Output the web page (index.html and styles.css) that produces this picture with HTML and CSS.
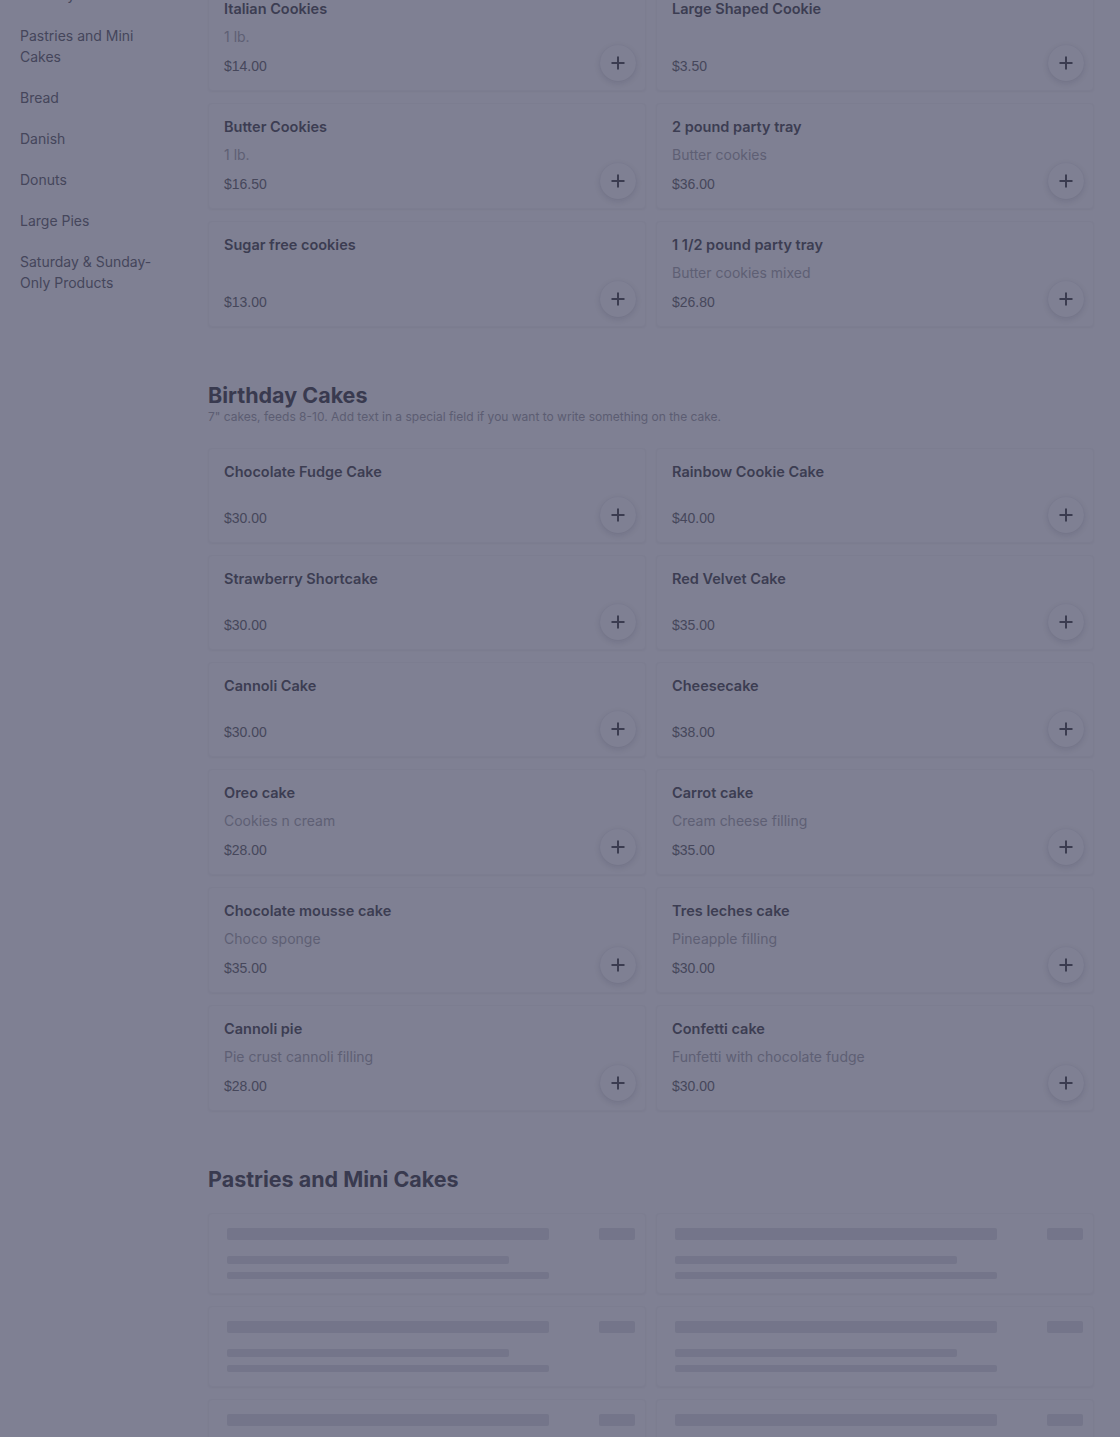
FILE: index.html
```html
<!DOCTYPE html>
<html lang="en">
<head>
<meta charset="utf-8">
<title>Menu</title>
<link rel="stylesheet" href="styles.css">
</head>
<body>
<div class="page">
  <nav class="sidebar">
    <a class="nav-item">Birthday Cakes</a>
    <a class="nav-item">Pastries and Mini Cakes</a>
    <a class="nav-item">Bread</a>
    <a class="nav-item">Danish</a>
    <a class="nav-item">Donuts</a>
    <a class="nav-item">Large Pies</a>
    <a class="nav-item">Saturday &amp; Sunday-Only Products</a>
  </nav>

  <main class="main">
    <section class="section section-first">
      <div class="grid">
        <div class="card"><div class="card-title">Italian Cookies</div><div class="card-desc">1 lb.</div><div class="card-price">$14.00</div><button class="add" aria-label="Add"><svg viewBox="0 0 16 16" width="16" height="16"><path d="M8 1.5v13M1.5 8h13" stroke="currentColor" stroke-width="2" fill="none"/></svg></button></div>
        <div class="card"><div class="card-title">Large Shaped Cookie</div><div class="card-price">$3.50</div><button class="add" aria-label="Add"><svg viewBox="0 0 16 16" width="16" height="16"><path d="M8 1.5v13M1.5 8h13" stroke="currentColor" stroke-width="2" fill="none"/></svg></button></div>
        <div class="card"><div class="card-title">Butter Cookies</div><div class="card-desc">1 lb.</div><div class="card-price">$16.50</div><button class="add" aria-label="Add"><svg viewBox="0 0 16 16" width="16" height="16"><path d="M8 1.5v13M1.5 8h13" stroke="currentColor" stroke-width="2" fill="none"/></svg></button></div>
        <div class="card"><div class="card-title">2 pound party tray</div><div class="card-desc">Butter cookies</div><div class="card-price">$36.00</div><button class="add" aria-label="Add"><svg viewBox="0 0 16 16" width="16" height="16"><path d="M8 1.5v13M1.5 8h13" stroke="currentColor" stroke-width="2" fill="none"/></svg></button></div>
        <div class="card"><div class="card-title">Sugar free cookies</div><div class="card-price">$13.00</div><button class="add" aria-label="Add"><svg viewBox="0 0 16 16" width="16" height="16"><path d="M8 1.5v13M1.5 8h13" stroke="currentColor" stroke-width="2" fill="none"/></svg></button></div>
        <div class="card"><div class="card-title">1 1/2 pound party tray</div><div class="card-desc">Butter cookies mixed</div><div class="card-price">$26.80</div><button class="add" aria-label="Add"><svg viewBox="0 0 16 16" width="16" height="16"><path d="M8 1.5v13M1.5 8h13" stroke="currentColor" stroke-width="2" fill="none"/></svg></button></div>
      </div>
    </section>

    <section class="section">
      <header class="section-head">
        <h2 class="section-title">Birthday Cakes</h2>
        <p class="section-desc">7" cakes, feeds 8-10. Add text in a special field if you want to write something on the cake.</p>
      </header>
      <div class="grid">
        <div class="card"><div class="card-title">Chocolate Fudge Cake</div><div class="card-price">$30.00</div><button class="add" aria-label="Add"><svg viewBox="0 0 16 16" width="16" height="16"><path d="M8 1.5v13M1.5 8h13" stroke="currentColor" stroke-width="2" fill="none"/></svg></button></div>
        <div class="card"><div class="card-title">Rainbow Cookie Cake</div><div class="card-price">$40.00</div><button class="add" aria-label="Add"><svg viewBox="0 0 16 16" width="16" height="16"><path d="M8 1.5v13M1.5 8h13" stroke="currentColor" stroke-width="2" fill="none"/></svg></button></div>
        <div class="card"><div class="card-title">Strawberry Shortcake</div><div class="card-price">$30.00</div><button class="add" aria-label="Add"><svg viewBox="0 0 16 16" width="16" height="16"><path d="M8 1.5v13M1.5 8h13" stroke="currentColor" stroke-width="2" fill="none"/></svg></button></div>
        <div class="card"><div class="card-title">Red Velvet Cake</div><div class="card-price">$35.00</div><button class="add" aria-label="Add"><svg viewBox="0 0 16 16" width="16" height="16"><path d="M8 1.5v13M1.5 8h13" stroke="currentColor" stroke-width="2" fill="none"/></svg></button></div>
        <div class="card"><div class="card-title">Cannoli Cake</div><div class="card-price">$30.00</div><button class="add" aria-label="Add"><svg viewBox="0 0 16 16" width="16" height="16"><path d="M8 1.5v13M1.5 8h13" stroke="currentColor" stroke-width="2" fill="none"/></svg></button></div>
        <div class="card"><div class="card-title">Cheesecake</div><div class="card-price">$38.00</div><button class="add" aria-label="Add"><svg viewBox="0 0 16 16" width="16" height="16"><path d="M8 1.5v13M1.5 8h13" stroke="currentColor" stroke-width="2" fill="none"/></svg></button></div>
        <div class="card"><div class="card-title">Oreo cake</div><div class="card-desc">Cookies n cream</div><div class="card-price">$28.00</div><button class="add" aria-label="Add"><svg viewBox="0 0 16 16" width="16" height="16"><path d="M8 1.5v13M1.5 8h13" stroke="currentColor" stroke-width="2" fill="none"/></svg></button></div>
        <div class="card"><div class="card-title">Carrot cake</div><div class="card-desc">Cream cheese filling</div><div class="card-price">$35.00</div><button class="add" aria-label="Add"><svg viewBox="0 0 16 16" width="16" height="16"><path d="M8 1.5v13M1.5 8h13" stroke="currentColor" stroke-width="2" fill="none"/></svg></button></div>
        <div class="card"><div class="card-title">Chocolate mousse cake</div><div class="card-desc">Choco sponge</div><div class="card-price">$35.00</div><button class="add" aria-label="Add"><svg viewBox="0 0 16 16" width="16" height="16"><path d="M8 1.5v13M1.5 8h13" stroke="currentColor" stroke-width="2" fill="none"/></svg></button></div>
        <div class="card"><div class="card-title">Tres leches cake</div><div class="card-desc">Pineapple filling</div><div class="card-price">$30.00</div><button class="add" aria-label="Add"><svg viewBox="0 0 16 16" width="16" height="16"><path d="M8 1.5v13M1.5 8h13" stroke="currentColor" stroke-width="2" fill="none"/></svg></button></div>
        <div class="card"><div class="card-title">Cannoli pie</div><div class="card-desc">Pie crust cannoli filling</div><div class="card-price">$28.00</div><button class="add" aria-label="Add"><svg viewBox="0 0 16 16" width="16" height="16"><path d="M8 1.5v13M1.5 8h13" stroke="currentColor" stroke-width="2" fill="none"/></svg></button></div>
        <div class="card"><div class="card-title">Confetti cake</div><div class="card-desc">Funfetti with chocolate fudge</div><div class="card-price">$30.00</div><button class="add" aria-label="Add"><svg viewBox="0 0 16 16" width="16" height="16"><path d="M8 1.5v13M1.5 8h13" stroke="currentColor" stroke-width="2" fill="none"/></svg></button></div>
      </div>
    </section>

    <section class="section">
      <header class="section-head">
        <h2 class="section-title">Pastries and Mini Cakes</h2>
      </header>
      <div class="grid">
        <div class="skeleton"><div class="sk-row"><span class="bar bar-title"></span><span class="bar bar-price"></span></div><span class="bar bar-line1"></span><span class="bar bar-line2"></span></div>
        <div class="skeleton"><div class="sk-row"><span class="bar bar-title"></span><span class="bar bar-price"></span></div><span class="bar bar-line1"></span><span class="bar bar-line2"></span></div>
        <div class="skeleton"><div class="sk-row"><span class="bar bar-title"></span><span class="bar bar-price"></span></div><span class="bar bar-line1"></span><span class="bar bar-line2"></span></div>
        <div class="skeleton"><div class="sk-row"><span class="bar bar-title"></span><span class="bar bar-price"></span></div><span class="bar bar-line1"></span><span class="bar bar-line2"></span></div>
        <div class="skeleton"><div class="sk-row"><span class="bar bar-title"></span><span class="bar bar-price"></span></div><span class="bar bar-line1"></span><span class="bar bar-line2"></span></div>
        <div class="skeleton"><div class="sk-row"><span class="bar bar-title"></span><span class="bar bar-price"></span></div><span class="bar bar-line1"></span><span class="bar bar-line2"></span></div>
      </div>
    </section>
  </main>
</div>
</body>
</html>
```

FILE: styles.css
```css
* { box-sizing: border-box; }

html, body {
  margin: 0;
  padding: 0;
  background: #7f8093;
  height: 1437px;
  overflow: hidden;
}

body {
  font-family: Inter, Lato, "Liberation Sans", sans-serif;
  color: #3c3d52;
}

.page {
  display: flex;
  align-items: flex-start;
  padding-right: 26px;
}

.sidebar {
  flex: 0 0 208px;
  width: 208px;
  padding: 0 38px 0 20px;
  margin-top: -26px;
  display: flex;
  flex-direction: column;
}

.nav-item {
  display: block;
  padding: 10px 0;
  font-size: 14px;
  line-height: 21px;
  color: #45465b;
  text-decoration: none;
}

.main {
  flex: 1 1 auto;
  min-width: 0;
  margin-top: -15px;
}

.section + .section {
  margin-top: 54px;
}

.section-head {
  margin-bottom: 20px;
}

.section-title {
  margin: 0;
  font-size: 21.5px;
  line-height: 28px;
  font-weight: 700;
  color: #393a4f;
}

.section-desc {
  margin: 0;
  padding-bottom: 3px;
  font-size: 12px;
  line-height: 16px;
  color: #5c5d72;
}

.grid {
  display: grid;
  grid-template-columns: 1fr 1fr;
  column-gap: 10px;
  row-gap: 12px;
}

.card {
  position: relative;
  display: flex;
  flex-direction: column;
  min-height: 95px;
  padding: 13px 15px 14px;
  border: 1px solid #7c7d90;
  border-radius: 4px;
  background: #7f8093;
  box-shadow: 0 1px 2px rgba(20, 20, 50, 0.04);
}

.card-title {
  font-size: 14.5px;
  line-height: 20px;
  font-weight: 600;
  color: #3c3d52;
}

.card-desc {
  margin-top: 8px;
  font-size: 14px;
  line-height: 20px;
  color: #5e5f74;
}

.card-price {
  margin-top: auto;
  padding-top: 9px;
  font-family: "Liberation Sans", Arial, sans-serif;
  font-size: 14px;
  line-height: 20px;
  color: #46475b;
}

.add {
  position: absolute;
  right: 9px;
  bottom: 9px;
  width: 36px;
  height: 36px;
  padding: 0;
  border: none;
  border-radius: 50%;
  background: #7f8093;
  color: #3b3c50;
  box-shadow: 0 2px 6px rgba(20, 20, 50, 0.12), 0 0 1px rgba(20, 20, 50, 0.06);
  display: flex;
  align-items: center;
  justify-content: center;
}

.add svg { display: block; }

.skeleton {
  height: 81px;
  padding: 14px 10px 14px 18px;
  border: 1px solid #7c7d90;
  border-radius: 4px;
  background: #7f8093;
  box-shadow: 0 1px 2px rgba(20, 20, 50, 0.04);
  display: flex;
  flex-direction: column;
}

.sk-row {
  display: flex;
  justify-content: space-between;
}

.bar {
  display: block;
  background: #74758a;
  border-radius: 2px;
}

.bar-title { width: 322px; height: 12px; }
.bar-price { width: 36px; height: 12px; }
.bar-line1 { width: 282px; height: 8px; margin-top: 16px; }
.bar-line2 { width: 322px; height: 8px; margin-top: 8px; }
```
